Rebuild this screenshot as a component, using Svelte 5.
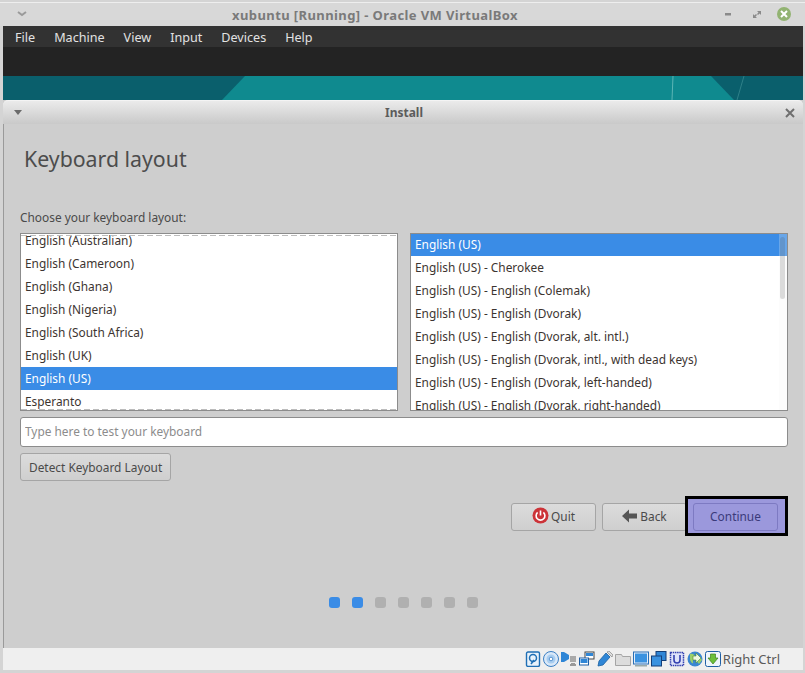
<script>
  const menus = ['File', 'Machine', 'View', 'Input', 'Devices', 'Help'];
  const layouts = [
    'English (Australian)',
    'English (Cameroon)',
    'English (Ghana)',
    'English (Nigeria)',
    'English (South Africa)',
    'English (UK)',
    'English (US)',
    'Esperanto'
  ];
  const variants = [
    'English (US)',
    'English (US) - Cherokee',
    'English (US) - English (Colemak)',
    'English (US) - English (Dvorak)',
    'English (US) - English (Dvorak, alt. intl.)',
    'English (US) - English (Dvorak, intl., with dead keys)',
    'English (US) - English (Dvorak, left-handed)',
    'English (US) - English (Dvorak, right-handed)'
  ];
  const steps = [true, true, false, false, false, false, false];
</script>

<div class="vm">
  <header class="vm-title">
    <svg class="chev" width="12" height="8" viewBox="0 0 12 8"><path d="M2 2l4 3 4-3" fill="none" stroke="#9a9a9a" stroke-width="2"/></svg>
    <span class="vm-name">xubuntu [Running] - Oracle VM VirtualBox</span>
    <div class="vm-controls">
      <svg width="14" height="14" viewBox="0 0 14 14"><rect x="0" y="6" width="6" height="2.500" fill="#8a8a8a"/></svg>
      <svg width="14" height="14" viewBox="0 0 14 14"><path d="M6 4h4v4L8.600 6.600 7 8 6 7l1.500-1.500zM6 11H2V7l1.400 1.400L5 7l1 1-1.500 1.500z" fill="#8a8a8a"/></svg>
      <span class="close-dot">
        <svg width="10" height="10" viewBox="0 0 10 10"><path d="M2 2l6 6M8 2l-6 6" stroke="#fff" stroke-width="2"/></svg>
      </span>
    </div>
  </header>

  <nav class="menubar">
    {#each menus as m}
      <span>{m}</span>
    {/each}
  </nav>

  <main class="guest">
    <div class="guest-bar"></div>
    <svg class="wallpaper" width="800" height="24" viewBox="0 0 800 24">
      <rect width="800" height="24" fill="#0a5f6c"/>
      <path d="M219 24L242 0H708L731 24Z" fill="#0f8a8f"/>
      <path d="M670 0L669 24" stroke="#5db5b5" stroke-width="1"/>
      <path d="M741 0L734 24" stroke="#2f8088" stroke-width="1"/>
    </svg>

    <section class="install">
      <div class="install-title">
        <svg width="10" height="6" viewBox="0 0 10 6"><path d="M1 0h8L5 5z" fill="#6b6b6b"/></svg>
        <b>Install</b>
        <svg width="10" height="10" viewBox="0 0 10 10"><path d="M1 1l8 8M9 1l-8 8" stroke="#6f6f6f" stroke-width="2"/></svg>
      </div>

      <div class="install-body">
        <h1>Keyboard layout</h1>
        <label for="test">Choose your keyboard layout:</label>

        <div class="lists">
          <div class="list dashed">
            <div class="rows shifted">
              {#each layouts as l}
                <div class="row" class:sel={l === 'English (US)'}>{l}</div>
              {/each}
            </div>
          </div>
          <div class="list">
            <div class="rows flush">
              {#each variants as v, i}
                <div class="row" class:sel={i === 0}>{v}</div>
              {/each}
            </div>
            <div class="scrollbar"><div class="thumb"></div></div>
          </div>
        </div>

        <input id="test" type="text" placeholder="Type here to test your keyboard" />

        <div class="detect-row">
          <button class="btn">Detect Keyboard Layout</button>
        </div>

        <div class="actions">
          <button class="btn">
            <svg width="17" height="17" viewBox="0 0 17 17">
              <circle cx="8.500" cy="8.500" r="8" fill="#cc3338"/>
              <path d="M5.600 5.400a4.400 4.400 0 1 0 5.800 0" fill="none" stroke="#fff" stroke-width="1.600"/>
              <path d="M8.500 3.500v5" stroke="#fff" stroke-width="1.600"/>
            </svg>
            Quit
          </button>
          <button class="btn">
            <svg width="16" height="14" viewBox="0 0 16 14"><path d="M0 7l7-6.500v4h8v5H7v4z" fill="#555"/></svg>
            Back
          </button>
          <div class="focus-ring">
            <button class="btn primary">Continue</button>
          </div>
        </div>

        <div class="dots">
          {#each steps as on}
            <span class="dot" class:on></span>
          {/each}
        </div>
      </div>
    </section>
  </main>

  <footer class="status">
    <svg class="ico" viewBox="0 0 16 16"><rect x="1.500" y="1" width="13" height="14.500" rx="1.500" fill="#e8f2fb" stroke="#1f6fb5" stroke-width="1.400"/><circle cx="8" cy="7" r="3.500" fill="none" stroke="#1f6fb5" stroke-width="1.500"/><path d="M6 13l3-4" stroke="#1f6fb5" stroke-width="1.500"/></svg>
    <svg class="ico" viewBox="0 0 16 16"><circle cx="8" cy="8" r="7.500" fill="#d9e8f8" stroke="#3b7fc4"/><circle cx="8" cy="8" r="4.500" fill="#a8cdf0"/><circle cx="8" cy="8" r="1.800" fill="#fff" stroke="#3b7fc4" stroke-width=".8"/></svg>
    <svg class="ico" viewBox="0 0 16 16"><path d="M0 1h3l5 3v4l-5 3H0z" fill="#2f86d6"/><rect x="9" y="5" width="6" height="6" fill="#aaa"/><path d="M10 12h4v1h1v2H9v-2h1z" fill="#999"/></svg>
    <svg class="ico" viewBox="0 0 16 16"><rect x="6" y="1" width="9" height="7" fill="#fff" stroke="#444"/><rect x="7" y="2" width="7" height="3" fill="#2f86d6"/><rect x=".5" y="7" width="9" height="7" fill="#fff" stroke="#1f5fa5"/><rect x="1.500" y="8" width="7" height="4" fill="#2f86d6"/></svg>
    <svg class="ico" viewBox="0 0 16 16"><path d="M1 15l1-5 7-8 4 4-7 8z" fill="#2f86d6" stroke="#1b5f9f" stroke-width=".8"/><path d="M10 1l2-1 4 4-1 2z" fill="#ddd" stroke="#777" stroke-width=".6"/></svg>
    <svg class="ico" viewBox="0 0 16 16"><path d="M.5 3.500h6l1 2h8v9H.5z" fill="#dcdcdc" stroke="#a5a5a5"/></svg>
    <svg class="ico" viewBox="0 0 16 16"><rect x=".5" y="1" width="15" height="12" fill="#e4eefa" stroke="#2a6fb5"/><rect x="2" y="2.500" width="12" height="9" fill="#3a92e0"/><rect x="2" y="14" width="12" height="1.500" fill="#9aa"/></svg>
    <svg class="ico" viewBox="0 0 16 16"><rect x="5" y=".5" width="10" height="9" fill="#2f86d6" stroke="#143f78"/><rect x=".5" y="5" width="10" height="10" fill="#3a92e0" stroke="#143f78"/></svg>
    <svg class="ico" viewBox="0 0 16 16"><rect x="1.500" y="1.500" width="13" height="13" fill="#dfe3fa" stroke="#3340b0" stroke-dasharray="1.500 .7" stroke-width="1.500"/><path d="M5 4v5a3 3 0 0 0 6 0V4" fill="none" stroke="#3340b0" stroke-width="1.600"/></svg>
    <svg class="ico" viewBox="0 0 16 16"><circle cx="8" cy="8" r="7.500" fill="#3a86d0"/><path d="M3 3c3-1 5 1 5 3S5 8 6 11s-3 0-3-3zM9 9l4-3 2 3-3 4z" fill="#9ad06a"/><path d="M6 5h3V2l5 5-5 5V9H6z" fill="#eef7e0" stroke="#4d8a2a" stroke-width=".6"/></svg>
    <svg class="ico" viewBox="0 0 16 16"><rect x=".5" y=".5" width="15" height="15" rx="2" fill="#eef5fb" stroke="#1f5fa5"/><path d="M5.500 3h5v4H13l-5 6-5-6h2.500z" fill="#6cbf3a" stroke="#3d7f1f" stroke-width=".7"/></svg>
    <span class="hostkey">Right Ctrl</span>
  </footer>
</div>

<style>
  :global(body) {
    margin: 0;
    background: #d4d4d4;
  }

  .vm {
    width: 805px;
    height: 673px;
    display: flex;
    flex-direction: column;
    font-family: "Noto Sans", sans-serif;
    font-size: 11.880px;
    overflow: hidden;
    box-sizing: border-box;
    padding: 2px 0 3px;
    background: #d4d4d4;
  }

  .vm-title {
    height: 24px;
    flex: none;
    display: flex;
    align-items: center;
    justify-content: center;
    background: #d8d8d8;
    position: relative;
    border-top: 1px solid #eeeeee;
    box-sizing: border-box;
  }

  .chev {
    position: absolute;
    left: 16px;
    top: 7px;
  }

  .vm-name {
    font-weight: 700;
    font-size: 13px;
    letter-spacing: 0.4px;
    color: #7a7a7a;
    margin-left: -55px;
  }

  .vm-controls {
    position: absolute;
    right: 14px;
    top: 4px;
    display: flex;
    align-items: center;
    gap: 12px;
  }

  .close-dot {
    width: 14px;
    height: 14px;
    border-radius: 50%;
    background: #92b372;
    display: flex;
    align-items: center;
    justify-content: center;
  }

  .menubar {
    height: 21px;
    flex: none;
    margin: 0 2px 0 3px;
    display: flex;
    align-items: center;
    gap: 19px;
    padding: 1px 0 0 12px;
    box-sizing: border-box;
    background: #323232;
    color: #e2e2e2;
    font-size: 12.600px;
  }

  .guest {
    flex: 1;
    display: flex;
    flex-direction: column;
    margin: 0 2px 0 3px;
    min-height: 0;
  }

  .guest-bar {
    height: 29px;
    flex: none;
    background: #232323;
  }

  .wallpaper {
    display: block;
    flex: none;
    width: 800px;
    height: 24px;
  }

  .install {
    flex: 1;
    display: flex;
    flex-direction: column;
    background: #cecece;
    min-height: 0;
  }

  .install-title {
    height: 24px;
    flex: none;
    display: flex;
    align-items: center;
    justify-content: space-between;
    padding: 0 8px 0 10px;
    background: linear-gradient(#ebebeb, #c9c9c9);
    border-top: 1px solid #f4f4f4;
    box-sizing: border-box;
    border-radius: 5px 5px 0 0;
    color: #5c5c5c;
    font-size: 12px;
  }

  .install-body {
    flex: 1;
    padding: 0 15px 0 16px;
    border-left: 1px solid #9a9a9a;
    color: #4a4a4a;
    display: flex;
    flex-direction: column;
  }

  h1 {
    margin: 21px 0 0 4px;
    font-size: 21.300px;
    line-height: 27px;
    font-weight: 400;
    color: #4c4c4c;
  }

  label {
    margin-top: 37px;
    line-height: 17px;
  }

  .lists {
    margin-top: 7px;
    display: flex;
    justify-content: space-between;
  }

  .list {
    position: relative;
    width: 378px;
    height: 178px;
    box-sizing: border-box;
    border: 1px solid #8c8c8c;
    background: #ffffff;
    overflow: hidden;
    color: #3c3430;
  }

  .dashed::before,
  .dashed::after {
    content: '';
    position: absolute;
    left: 0;
    right: 0;
    height: 1px;
    background: repeating-linear-gradient(90deg, #bcbcbc 0 6px, transparent 6px 9px);
    z-index: 1;
  }

  .dashed::before {
    top: 1px;
  }

  .dashed::after {
    bottom: 0;
  }

  .shifted {
    margin-top: -5px;
  }

  .flush {
    margin-top: -1px;
  }

  .row {
    height: 23px;
    line-height: 23px;
    padding-left: 4px;
    white-space: nowrap;
  }

  .row.sel {
    background: #3a8ce6;
    color: #ffffff;
  }

  .scrollbar {
    position: absolute;
    top: 0;
    right: 0;
    bottom: 0;
    width: 8px;
    background: rgba(245, 245, 245, 0.25);
  }

  .thumb {
    width: 5px;
    height: 62px;
    margin: 3px 0 0 1px;
    border-radius: 3px;
    background: rgba(70, 70, 70, 0.18);
  }

  input {
    margin-top: 6px;
    height: 30px;
    box-sizing: border-box;
    border: 1px solid #8c8c8c;
    border-radius: 3px;
    background: #ffffff;
    padding: 0 4px 2px;
    font: inherit;
    color: #4a4a4a;
  }

  input::placeholder {
    color: #8c8c8c;
    opacity: 1;
  }

  .detect-row {
    margin-top: 6px;
    display: flex;
  }

  .btn {
    height: 28px;
    box-sizing: border-box;
    border: 1px solid #a5a5a5;
    border-radius: 3px;
    background: linear-gradient(#dcdcdc, #cfcfcf);
    font: inherit;
    color: #4a4a4a;
    padding: 0 8px;
    display: flex;
    align-items: center;
    justify-content: center;
    gap: 2px;
  }

  .actions {
    margin-top: 15px;
    height: 40px;
    display: flex;
    justify-content: flex-end;
    align-items: center;
  }

  .actions .btn {
    width: 85px;
    margin: 1px 6px 0 0;
    padding-bottom: 2px;
  }

  .focus-ring {
    width: 103px;
    height: 40px;
    box-sizing: border-box;
    margin-left: -8px;
    padding-left: 5px;
    border: 3px solid #000000;
    background: #9b98dc;
    display: flex;
    align-items: center;
    position: relative;
  }

  .actions .btn.primary {
    width: 85px;
    margin: 1px 0 0;
    background: #9b98dc;
    border-color: #7d7ac2;
    color: #3a3a7a;
  }

  .dots {
    margin-top: 61px;
    display: flex;
    justify-content: center;
    gap: 12px;
    padding-right: 2px;
  }

  .dot {
    width: 11px;
    height: 11px;
    border-radius: 3px;
    background: #b0b0b0;
  }

  .dot.on {
    background: #3a8ce6;
  }

  .status {
    height: 22px;
    flex: none;
    margin: 0 2px 0 3px;
    display: flex;
    align-items: center;
    justify-content: flex-end;
    gap: 2px;
    padding-right: 23px;
    background: #efefef;
    box-sizing: border-box;
    color: #5a5a5a;
  }

  .ico {
    width: 16px;
    height: 16px;
    flex: none;
  }

  .hostkey {
    font-size: 13px;
  }
</style>
